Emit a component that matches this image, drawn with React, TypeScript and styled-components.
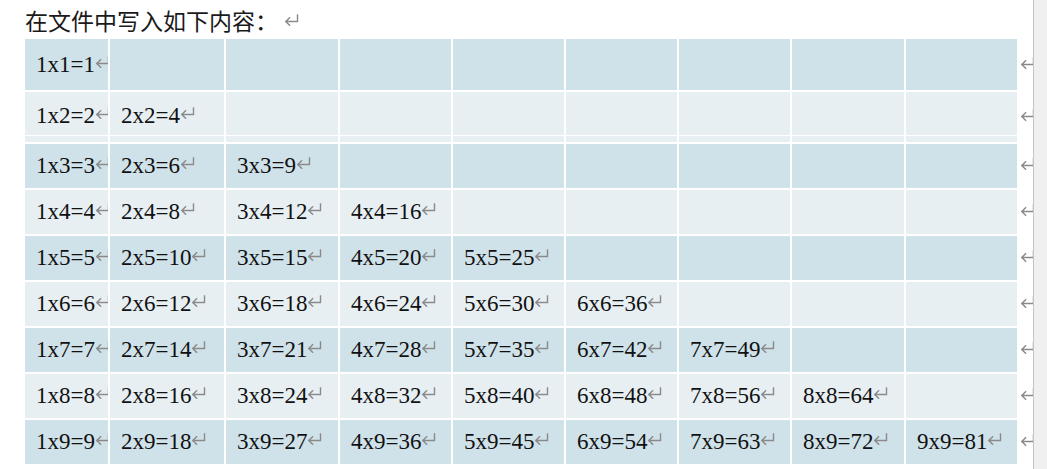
import React from "react";
import styled, { createGlobalStyle } from "styled-components";

const GlobalStyle = createGlobalStyle`
  html, body {
    margin: 0;
    padding: 0;
    background: #ffffff;
  }
  body {
    width: 1047px;
    height: 469px;
    overflow: hidden;
  }
`;

const Screen = styled.div`
  display: flex;
  width: 1047px;
  height: 469px;
`;

const Page = styled.div`
  width: 1033px;
  flex: none;
  box-sizing: border-box;
  padding-left: 25px;
  overflow: hidden;
  background: #ffffff;
`;

const SideBar = styled.div`
  flex: 1;
  background: #f0f0f0;
  border-left: 1px solid #c4c4c4;
`;

const Title = styled.div`
  height: 39px;
  line-height: 41px;
  font-family: "Noto Sans CJK SC", "Noto Sans", sans-serif;
  font-size: 23px;
  color: #1a1a1a;
  white-space: nowrap;
`;

const TitleMark = styled.span`
  margin-left: 6px;
`;

const Table = styled.div`
  display: flex;
  flex-direction: column;
  gap: 2px;
`;

const Row = styled.div<{ $h: number }>`
  display: flex;
  gap: 2px;
  height: ${(p) => p.$h}px;
  flex: none;
`;

const Cell = styled.div<{ $w: number; $dark: boolean }>`
  width: ${(p) => p.$w}px;
  flex: none;
  display: flex;
  flex-direction: column;
  background: ${(p) => (p.$dark ? "#d0e2e9" : "#e7eff3")};
  overflow: hidden;
`;

const CellBody = styled.div<{ $shift: number }>`
  flex: 1;
  display: flex;
  align-items: center;
  padding-left: 11px;
  padding-top: ${(p) => p.$shift}px;
  font-family: "Liberation Serif", "Times New Roman", serif;
  font-size: 23px;
  color: #111111;
  white-space: nowrap;
`;

const CellStrip = styled.div`
  height: 6px;
  flex: none;
  border-top: 1px solid #ffffff;
`;

const RowEnd = styled.div`
  width: 16px;
  flex: none;
  margin-left: 1px;
  display: flex;
  align-items: center;
  padding-bottom: 4px;
  box-sizing: border-box;
`;

const MarkSvg = styled.svg`
  display: inline-block;
  flex: none;
  vertical-align: 4px;
`;

const Mark: React.FC = () => (
  <MarkSvg width="15" height="12" viewBox="0 0 15 12" fill="none">
    <path
      d="M13.5 1V7.5H1.8M5.6 3.7L1.8 7.5L5.6 11.3"
      stroke="#8a8a8a"
      strokeWidth="1.4"
      strokeLinecap="square"
    />
  </MarkSvg>
);

const widths = [83, 114, 112, 111, 111, 111, 111, 112, 111];
const heights = [51, 50, 44, 44, 44, 44, 44, 44, 44];

export default function App() {
  return (
    <>
      <GlobalStyle />
      <Screen>
        <Page>
          <Title>
            在文件中写入如下内容：
            <TitleMark>
              <Mark />
            </TitleMark>
          </Title>
          <Table>
            {heights.map((h, r) => {
              const n = r + 1;
              const dark = r % 2 === 0;
              return (
                <Row key={n} $h={h}>
                  {widths.map((w, c) => {
                    const m = c + 1;
                    return (
                      <Cell key={m} $w={w} $dark={dark}>
                        <CellBody $shift={n === 2 ? 4 : 0}>
                          {m <= n ? (
                            <span>
                              {`${m}x${n}=${m * n}`}
                              <Mark />
                            </span>
                          ) : null}
                        </CellBody>
                        {n === 2 ? <CellStrip /> : null}
                      </Cell>
                    );
                  })}
                  <RowEnd>
                    <Mark />
                  </RowEnd>
                </Row>
              );
            })}
          </Table>
        </Page>
        <SideBar />
      </Screen>
    </>
  );
}
